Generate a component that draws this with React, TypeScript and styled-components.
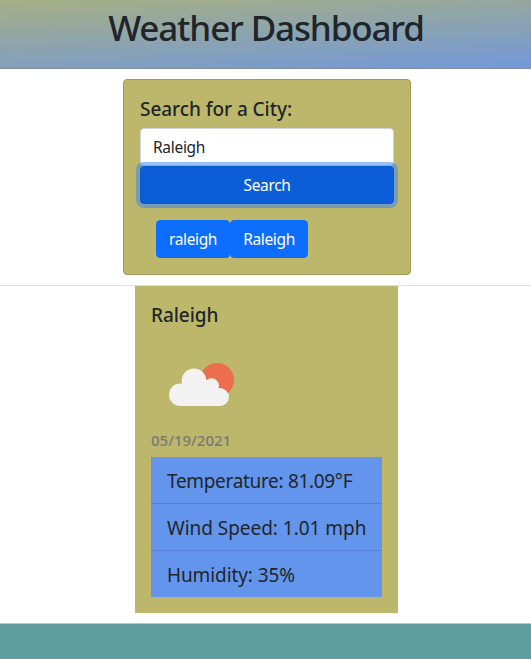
import React from 'react';
import styled, { createGlobalStyle } from 'styled-components';

const GlobalStyle = createGlobalStyle`
  *, *::before, *::after { box-sizing: border-box; }
  html, body { margin: 0; background: #fff; overflow: hidden; }
  body {
    font-family: 'Noto Sans', 'Open Sans', sans-serif;
    font-size: 16px;
    line-height: 1.5;
    color: #212529;
  }
  h1, h5, h6, ul { margin: 0; padding: 0; }
`;

const Page = styled.div`
  display: flex;
  flex-direction: column;
  height: 659px;
`;

const Header = styled.header`
  height: 69px;
  padding: 6px 0 0 1px;
  border-bottom: 1px solid #818f96;
  background: linear-gradient(176.500deg, #a6af84 0%, #7298d9 100%);
  text-align: center;
`;

const Title = styled.h1`
  font-size: 35px;
  font-weight: 500;
  line-height: 44px;
  letter-spacing: -1.15px;
  white-space: nowrap;
`;

const SearchSection = styled.section`
  display: flex;
  justify-content: center;
  height: 217px;
  padding: 10px 0;
  padding-left: 3px;
  border-bottom: 1px solid #dfdfdf;
`;

const SearchCard = styled.div`
  width: 288px;
  height: 196px;
  padding: 16px;
  border: 1px solid #9f9a5a;
  border-radius: 4px;
  background: #bdb76b;
`;

const Label = styled.h5`
  height: 32px;
  font-size: 19px;
  font-weight: 500;
  line-height: 27px;
  letter-spacing: -0.05px;
  white-space: nowrap;
`;

const CityInput = styled.input`
  display: block;
  width: 100%;
  height: 38px;
  padding: 6px 12px;
  border: 1px solid #ced4da;
  border-radius: 4px;
  outline: none;
  background: #fff;
  color: #212529;
  font: inherit;
  font-size: 15.5px;
  letter-spacing: -0.3px;
`;

const Button = styled.button<{ $focused?: boolean }>`
  position: relative;
  display: block;
  width: ${(p) => (p.$focused ? '100%' : 'auto')};
  height: 38px;
  padding: 2px 0 0;
  border: 1px solid ${(p) => (p.$focused ? '#0a58ca' : '#0d6efd')};
  border-radius: 4px;
  background: ${(p) => (p.$focused ? '#0b5ed7' : '#0d6efd')};
  box-shadow: ${(p) => (p.$focused ? '0 0 0 4px rgba(49, 132, 253, 0.5)' : 'none')};
  color: #fff;
  font: inherit;
  font-size: 15.5px;
  letter-spacing: -0.35px;
`;

const History = styled.div`
  display: grid;
  grid-template-columns: 74px 78px;
  padding: 16px;
`;

const WeatherSection = styled.main`
  display: flex;
  justify-content: center;
  height: 337px;
  padding-left: 2px;
`;

const WeatherCard = styled.article`
  width: 263px;
  height: 327px;
  padding: 16px;
  background: #bdb76b;
`;

const WeatherIcon = styled.svg`
  display: block;
  width: 100px;
  height: 100px;
`;

const DateText = styled.h6`
  height: 23px;
  font-size: 15px;
  font-weight: 500;
  line-height: 13px;
  color: #76797a;
`;

const Stats = styled.ul`
  list-style: none;
  background: #6495ed;
`;

const Stat = styled.li<{ $spacing: number }>`
  height: 47px;
  padding: 0 16px;
  border-bottom: 1px solid #5681d1;
  font-size: 19px;
  line-height: 48px;
  letter-spacing: ${(p) => p.$spacing}px;
  white-space: nowrap;
  &:last-child { height: 46px; border-bottom: 0; }
`;

const Footer = styled.footer`
  flex: 1;
  border-top: 1px solid #b8c9c9;
  background: #5f9ea0;
`;

export default function App() {
  return (
    <Page>
      <GlobalStyle />
      <Header>
        <Title>Weather Dashboard</Title>
      </Header>
      <SearchSection>
        <SearchCard>
          <Label>Search for a City:</Label>
          <CityInput defaultValue="Raleigh" aria-label="City" />
          <Button $focused>Search</Button>
          <History>
            <Button>raleigh</Button>
            <Button>Raleigh</Button>
          </History>
        </SearchCard>
      </SearchSection>
      <WeatherSection>
        <WeatherCard>
          <Label>Raleigh</Label>
          <WeatherIcon viewBox="0 0 100 100" aria-label="Few clouds">
            <circle cx="66" cy="46" r="17" fill="#ec6e4c" />
            <g fill="#f2f2f2">
              <circle cx="29.300" cy="60.700" r="11.300" />
              <circle cx="43" cy="46.700" r="12.300" />
              <circle cx="60.500" cy="51.800" r="7.500" />
              <circle cx="69" cy="63" r="9" />
              <path d="M29.300 72V54L43 46H57L66 56L69 63V72Z" />
            </g>
          </WeatherIcon>
          <DateText>05/19/2021</DateText>
          <Stats>
            <Stat $spacing={-0.32}>Temperature: 81.09°F</Stat>
            <Stat $spacing={-0.03}>Wind Speed: 1.01 mph</Stat>
            <Stat $spacing={-0.1}>Humidity: 35%</Stat>
          </Stats>
        </WeatherCard>
      </WeatherSection>
      <Footer />
    </Page>
  );
}
